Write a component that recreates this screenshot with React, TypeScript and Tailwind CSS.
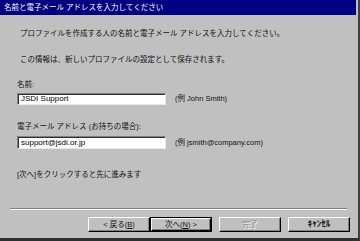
import React from 'react';

const font = "font-['Liberation_Sans','Noto_Sans_CJK_JP',sans-serif]";

interface BtnProps {
  children: React.ReactNode;
  isDefault?: boolean;
  disabled?: boolean;
}

const Btn: React.FC<BtnProps> = ({ children, isDefault, disabled }) => (
  <div
    className={`w-[62px] h-[15px] ${isDefault ? 'border border-black' : ''} flex`}
  >
    <div className="flex-1 border-t border-l border-t-white border-l-white border-b border-r border-b-black border-r-black bg-[#c0c0c0] shadow-[inset_-1px_-1px_0_#808080] flex items-center justify-center">
      <span
        className={`text-[7.5px] leading-[10px] ${disabled ? 'text-[#888] [text-shadow:1px_1px_0_#fff]' : 'text-[#111]'}`}
      >
        {children}
      </span>
    </div>
  </div>
);

const Field: React.FC<{ value: string; h: string }> = ({ value, h }) => (
  <div
    className={`w-[149px] ${h} bg-white border-t border-l border-t-[#808080] border-l-[#808080] border-b border-r border-b-[#e8e8e8] border-r-[#e8e8e8] shadow-[inset_1px_1px_0_#303030] flex items-center px-[3px]`}
  >
    <span className="text-[8px] leading-[10px] text-black">{value}</span>
  </div>
);

export default function App() {
  return (
    <div className={`w-[360px] h-[241px] bg-[#c0c0c0] ${font} text-[#111] flex flex-col border-r-2 border-r-[#404040] border-b-[3px] border-b-[#303030] overflow-hidden`}>
      <div className="h-[15px] w-[356px] bg-[#000080] text-white text-[7.5px] leading-[15px] pl-[4px] whitespace-nowrap">
        名前と電子メール アドレスを入力してください
      </div>

      <div className="pl-[20px] mt-[14px] text-[7.5px] leading-[10px] whitespace-nowrap">
        プロファイルを作成する人の名前と電子メール アドレスを入力してください。
      </div>
      <div className="pl-[20px] mt-[16px] text-[7.5px] leading-[10px] whitespace-nowrap">
        この情報は、新しいプロファイルの設定として保存されます。
      </div>

      <div className="pl-[17px] mt-[15px] text-[7.5px] leading-[10px]">名前:</div>
      <div className="pl-[17px] mt-[3px] flex items-center gap-[9px]">
        <Field value="JSDI Support" h="h-[12px]" />
        <span className="text-[7.5px] leading-[10px] whitespace-nowrap">(例 John Smith)</span>
      </div>

      <div className="pl-[17px] mt-[17px] text-[7.5px] leading-[10px] whitespace-nowrap">
        電子メール アドレス (お持ちの場合):
      </div>
      <div className="pl-[17px] mt-[4px] flex items-center gap-[9px]">
        <Field value="support@jsdi.or.jp" h="h-[13px]" />
        <span className="text-[7.5px] leading-[10px] whitespace-nowrap">(例 jsmith@company.com)</span>
      </div>

      <div className="pl-[17px] mt-[21px] text-[7.5px] leading-[10px] whitespace-nowrap">
        [次へ]をクリックすると先に進みます
      </div>

      <div className="mt-[28px] ml-[10px] w-[337px] border-t border-t-[#808080] border-b border-b-white" />

      <div className="mt-[7px] flex pl-[88px]">
        <Btn>
          &lt; 戻る(<span className="underline">B</span>)
        </Btn>
        <Btn isDefault>
          次へ(<span className="underline">N</span>) &gt;
        </Btn>
        <div className="ml-[7px]">
          <Btn disabled>完了</Btn>
        </div>
        <div className="ml-[7px]">
          <Btn>
            <span className="text-[9px] font-bold">ｷｬﾝｾﾙ</span>
          </Btn>
        </div>
      </div>
    </div>
  );
}
